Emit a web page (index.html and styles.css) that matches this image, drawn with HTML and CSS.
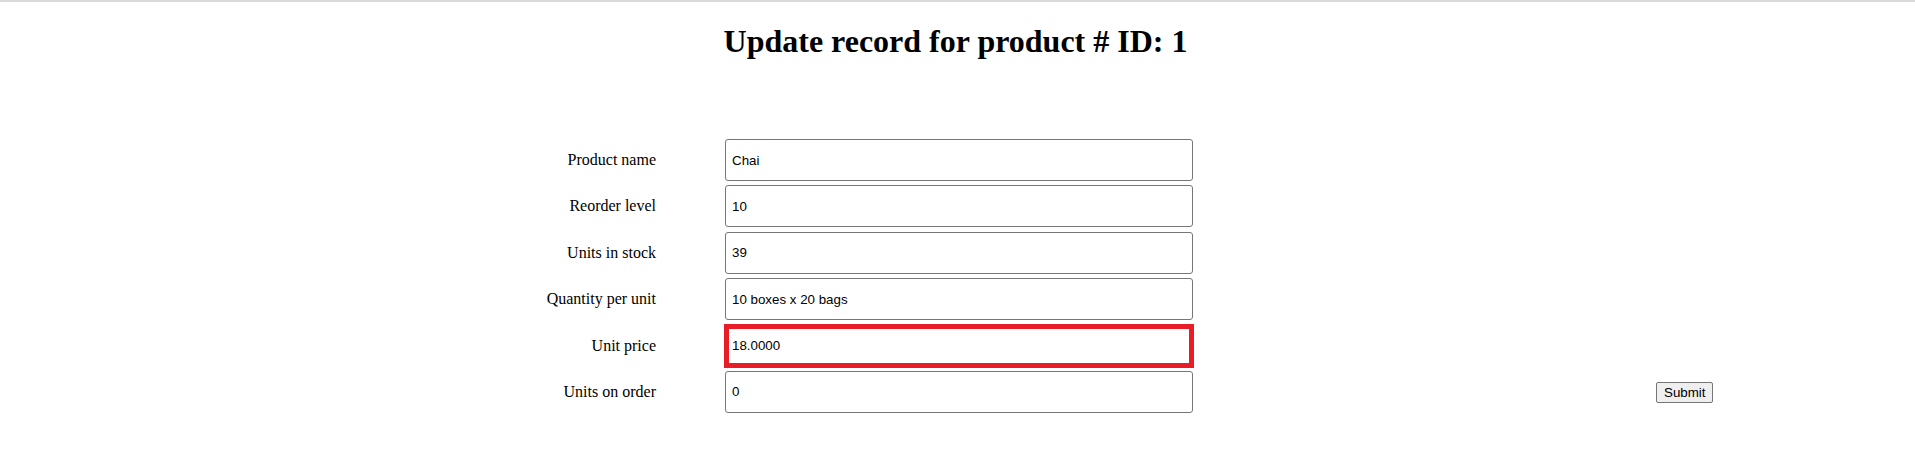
FILE: index.html
```html
<!DOCTYPE html>
<html>
<head>
<meta charset="utf-8">
<title>Update record</title>
<link rel="stylesheet" href="styles.css">
</head>
<body>
<div class="page">
  <h1 class="title">Update record for product # ID: 1</h1>
  <form class="form">
    <label class="lbl">Product name</label>
    <input class="field" type="text" value="Chai">
    <span></span><span></span>

    <label class="lbl">Reorder level</label>
    <input class="field" type="text" value="10">
    <span></span><span></span>

    <label class="lbl">Units in stock</label>
    <input class="field" type="text" value="39">
    <span></span><span></span>

    <label class="lbl">Quantity per unit</label>
    <input class="field" type="text" value="10 boxes x 20 bags">
    <span></span><span></span>

    <label class="lbl">Unit price</label>
    <input class="field field-error" type="text" value="18.0000">
    <span></span><span></span>

    <label class="lbl">Units on order</label>
    <input class="field" type="text" value="0">
    <span></span>
    <button class="submit" type="button">Submit</button>
  </form>
</div>
</body>
</html>
```

FILE: styles.css
```css
html, body {
  margin: 0;
  padding: 0;
  background: #ffffff;
}

body {
  font-family: "Liberation Serif", "Times New Roman", serif;
  color: #000;
}

.page {
  border-top: 2px solid #d9d9d9;
}

.title {
  margin: 21px 0 0 0;
  padding-right: 4px;
  font-size: 32px;
  font-weight: bold;
  text-align: center;
  line-height: 37px;
}

.form {
  display: grid;
  grid-template-columns: 656px 468px 394px auto;
  column-gap: 69px;
  row-gap: 4.4px;
  margin-top: 79px;
  align-items: center;
}

.lbl {
  font-size: 16px;
  text-align: right;
}

.field {
  box-sizing: border-box;
  height: 42px;
  width: 468px;
  border: 1px solid #767676;
  border-radius: 3px;
  padding: 0 6px;
  font-family: "Liberation Sans", Arial, sans-serif;
  font-size: 13.333px;
  color: #000;
  background: #fff;
  margin: 0;
}

.field-error {
  width: 470px;
  height: 44px;
  margin: -1px 0 -1px -1px;
  border: 5px solid #e81d25;
  border-radius: 0;
  padding: 0 3px;
}

.submit {
  justify-self: start;
  margin-left: -69px;
  margin-top: 2px;
  font-family: "Liberation Sans", Arial, sans-serif;
  font-size: 13.333px;
  padding: 2px 7px;
  border: 1px solid #767676;
  border-radius: 2px;
  background: #efefef;
  color: #000;
}
```
